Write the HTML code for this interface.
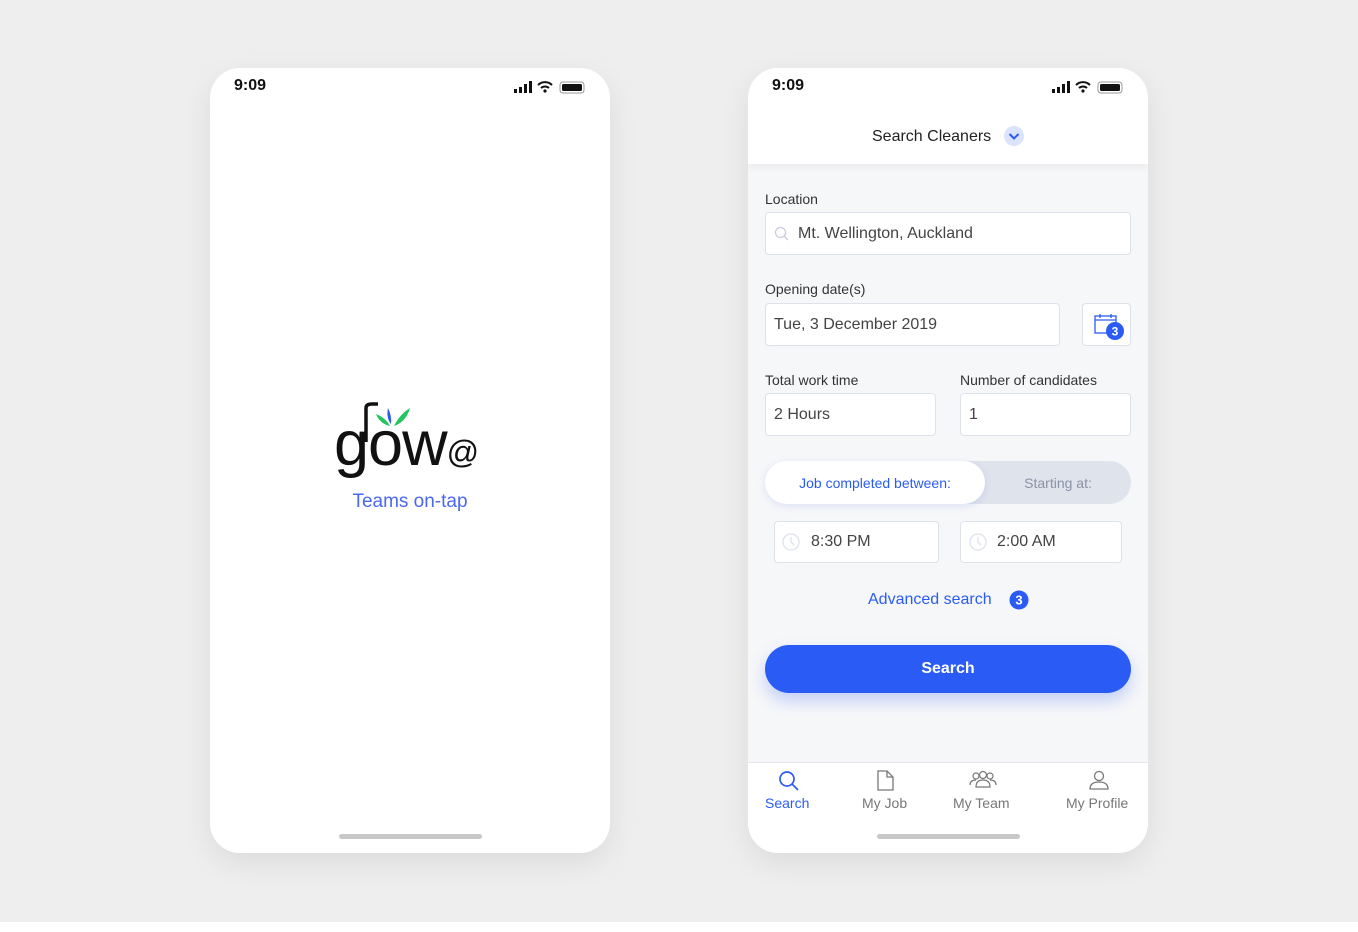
<!DOCTYPE html>
<html><head><style>
*{box-sizing:border-box;margin:0;padding:0}
body{width:1358px;height:932px;background:#fff;font-family:"Liberation Sans",sans-serif;position:relative;overflow:hidden}
.bg{position:absolute;left:0;top:0;width:1358px;height:922px;background:#eeeeee}
.ph{position:absolute;top:68px;width:400px;height:785px;background:#fff;border-radius:30px;overflow:hidden;box-shadow:0 10px 30px rgba(0,0,0,.08)}
.time{position:absolute;left:24px;top:9px;font-size:16px;font-weight:bold;color:#111}
.st{position:absolute;right:24px;top:13px}
.home{position:absolute;left:129px;bottom:14px;width:143px;height:5px;border-radius:3px;background:#c8c8c8}
.abs{position:absolute}
.lbl{position:absolute;font-size:14px;color:#333}
.inp{position:absolute;background:#fff;border:1px solid #dde1ea;border-radius:4px;font-size:16px;color:#444;padding-left:8px;display:flex;align-items:center}
</style></head><body>
<div class="bg"></div>

<div class="ph" style="left:210px">
  <div class="time">9:09</div>
  <svg class="st" width="72" height="13" viewBox="0 0 72 13"><rect x="0" y="8" width="3" height="4" fill="#111"/><rect x="5" y="6" width="3" height="6" fill="#111"/><rect x="10" y="3" width="3" height="9" fill="#111"/><rect x="15" y="0" width="3" height="12" fill="#111"/><path d="M24 4 A10 10 0 0 1 38 4 M27 7 A6 6 0 0 1 35 7" stroke="#111" stroke-width="2" fill="none"/><circle cx="31" cy="10" r="1.6" fill="#111"/><rect x="46" y="1" width="24" height="11" rx="3" fill="none" stroke="#999"/><rect x="48" y="3" width="20" height="7" rx="1.5" fill="#111"/></svg>
  <div class="abs" style="left:124px;top:332px;width:160px;height:80px">
    <svg class="abs" style="left:0;top:0" width="160" height="80" viewBox="0 0 160 80"><path d="M32 42 V8 Q32 4 38 4 H44" stroke="#111" stroke-width="3.5" fill="none"/><path d="M54 8 Q58 16 57 24 Q52 18 54 8Z" fill="#2a5cf5"/><path d="M42 14 Q52 18 56 26 Q46 24 42 14Z" fill="#22c55e"/><path d="M76 8 Q66 14 60 26 Q72 22 76 8Z" fill="#22c55e"/></svg>
    <div class="abs" style="left:0;top:4px;font-size:63px;line-height:80px;color:#111;letter-spacing:-1px">gow<span style="font-size:32px;letter-spacing:0;position:relative;top:-2px">@</span></div>
  </div>
  <div class="abs" style="left:0;width:400px;top:423px;text-align:center;font-size:19px;color:#4a68f2">Teams on-tap</div>
  <div class="home"></div>
</div>

<div class="ph" style="left:748px;background:#f6f7f9">
  <div class="abs" style="left:0;top:0;width:400px;height:96px;background:#fff;box-shadow:0 3px 8px rgba(0,0,0,.06)"></div>
  <div class="time">9:09</div>
  <svg class="st" width="72" height="13" viewBox="0 0 72 13"><rect x="0" y="8" width="3" height="4" fill="#111"/><rect x="5" y="6" width="3" height="6" fill="#111"/><rect x="10" y="3" width="3" height="9" fill="#111"/><rect x="15" y="0" width="3" height="12" fill="#111"/><path d="M24 4 A10 10 0 0 1 38 4 M27 7 A6 6 0 0 1 35 7" stroke="#111" stroke-width="2" fill="none"/><circle cx="31" cy="10" r="1.6" fill="#111"/><rect x="46" y="1" width="24" height="11" rx="3" fill="none" stroke="#999"/><rect x="48" y="3" width="20" height="7" rx="1.5" fill="#111"/></svg>
  <div class="abs" style="left:124px;top:60px;font-size:16px;color:#222">Search Cleaners</div>
  <svg class="abs" style="left:256px;top:58px" width="20" height="20"><circle cx="10" cy="10" r="10" fill="#dbe3fd"/><path d="M5.5 8 L10 12.5 L14.5 8" stroke="#2a5cf5" stroke-width="2" fill="none"/></svg>

  <div class="lbl" style="left:17px;top:123px">Location</div>
  <div class="inp" style="left:17px;top:144px;width:366px;height:43px;padding-left:32px">Mt. Wellington, Auckland</div>
  <svg class="abs" style="left:26px;top:158px" width="16" height="16"><circle cx="6.5" cy="6.5" r="5" stroke="#ccd" stroke-width="1.3" fill="none"/><path d="M10 10 L14 14" stroke="#ccd" stroke-width="1.3"/></svg>

  <div class="lbl" style="left:17px;top:213px">Opening date(s)</div>
  <div class="inp" style="left:17px;top:235px;width:295px;height:43px">Tue, 3 December 2019</div>
  <div class="inp" style="left:334px;top:235px;width:49px;height:43px;padding:0"></div>
  <svg class="abs" style="left:346px;top:245px" width="30" height="28"><rect x="1" y="3" width="21" height="17" fill="none" stroke="#2a5cf5" stroke-width="1.3"/><path d="M1 7 H22 M6 1 V5 M17 1 V5" stroke="#2a5cf5" stroke-width="1.3"/><circle cx="21" cy="18" r="9" fill="#2a5cf5"/><text x="21" y="22.5" font-size="12" font-weight="bold" fill="#fff" text-anchor="middle" font-family="Liberation Sans">3</text></svg>

  <div class="lbl" style="left:17px;top:304px">Total work time</div>
  <div class="lbl" style="left:212px;top:304px">Number of candidates</div>
  <div class="inp" style="left:17px;top:325px;width:171px;height:43px">2 Hours</div>
  <div class="inp" style="left:212px;top:325px;width:171px;height:43px">1</div>

  <div class="abs" style="left:17px;top:393px;width:366px;height:43px;border-radius:22px;background:#dfe3ec"></div>
  <div class="abs" style="left:17px;top:393px;width:220px;height:43px;border-radius:22px;background:#fff;box-shadow:0 2px 8px rgba(80,100,240,.15);color:#2a5cf5;font-size:14px;display:flex;align-items:center;justify-content:center">Job completed between:</div>
  <div class="abs" style="left:237px;top:393px;width:146px;height:43px;color:#8a92a6;font-size:14px;display:flex;align-items:center;justify-content:center">Starting at:</div>

  <div class="inp" style="left:26px;top:453px;width:165px;height:42px;padding-left:36px">8:30 PM</div>
  <div class="inp" style="left:212px;top:453px;width:162px;height:42px;padding-left:36px">2:00 AM</div>
  <svg class="abs" style="left:34px;top:465px" width="20" height="20"><circle cx="9" cy="9" r="8" stroke="#dde1ea" stroke-width="1.3" fill="none"/><path d="M9 4 V9 L12 12" stroke="#dde1ea" stroke-width="1.3" fill="none"/></svg>
  <svg class="abs" style="left:221px;top:465px" width="20" height="20"><circle cx="9" cy="9" r="8" stroke="#dde1ea" stroke-width="1.3" fill="none"/><path d="M9 4 V9 L12 12" stroke="#dde1ea" stroke-width="1.3" fill="none"/></svg>

  <div class="abs" style="left:120px;top:523px;font-size:16px;color:#2a5cf5">Advanced search</div>
  <svg class="abs" style="left:261px;top:522px" width="20" height="20"><circle cx="10" cy="10" r="9.5" fill="#2a5cf5"/><text x="10" y="14.5" font-size="13" font-weight="bold" fill="#fff" text-anchor="middle" font-family="Liberation Sans">3</text></svg>

  <div class="abs" style="left:17px;top:577px;width:366px;height:48px;border-radius:24px;background:#2a5cf5;box-shadow:0 8px 16px rgba(42,92,245,.25);color:#fff;font-size:16px;font-weight:bold;display:flex;align-items:center;justify-content:center">Search</div>

  <div class="abs" style="left:0;top:694px;width:400px;height:91px;background:#fff;border-top:1px solid #e4e6ec"></div>
  <svg class="abs" style="left:30px;top:702px" width="22" height="22"><circle cx="9" cy="9" r="7" stroke="#2a5cf5" stroke-width="1.7" fill="none"/><path d="M14 14 L20 20" stroke="#2a5cf5" stroke-width="1.7"/></svg>
  <svg class="abs" style="left:128px;top:702px" width="20" height="22"><path d="M2 1 H11 L17 7 V20 H2 Z M11 1 V7 H17" stroke="#777" stroke-width="1.3" fill="none"/></svg>
  <svg class="abs" style="left:220px;top:702px" width="30" height="20"><circle cx="15" cy="5" r="3.5" stroke="#777" stroke-width="1.2" fill="none"/><circle cx="8" cy="6" r="3" stroke="#777" stroke-width="1.2" fill="none"/><circle cx="22" cy="6" r="3" stroke="#777" stroke-width="1.2" fill="none"/><path d="M8 17 Q8 10 15 10 Q22 10 22 17 Z M2 15 Q2 10 8 10 M28 15 Q28 10 22 10" stroke="#777" stroke-width="1.2" fill="none"/></svg>
  <svg class="abs" style="left:340px;top:702px" width="22" height="20"><circle cx="11" cy="6" r="4.5" stroke="#777" stroke-width="1.3" fill="none"/><path d="M2 19 Q2 12 11 12 Q20 12 20 19 Z" stroke="#777" stroke-width="1.3" fill="none"/></svg>
  <div class="abs" style="left:17px;top:727px;font-size:14px;color:#2a5cf5">Search</div>
  <div class="abs" style="left:114px;top:727px;font-size:14px;color:#777">My Job</div>
  <div class="abs" style="left:205px;top:727px;font-size:14px;color:#777">My Team</div>
  <div class="abs" style="left:318px;top:727px;font-size:14px;color:#777">My Profile</div>
  <div class="home"></div>
</div>
</body></html>
